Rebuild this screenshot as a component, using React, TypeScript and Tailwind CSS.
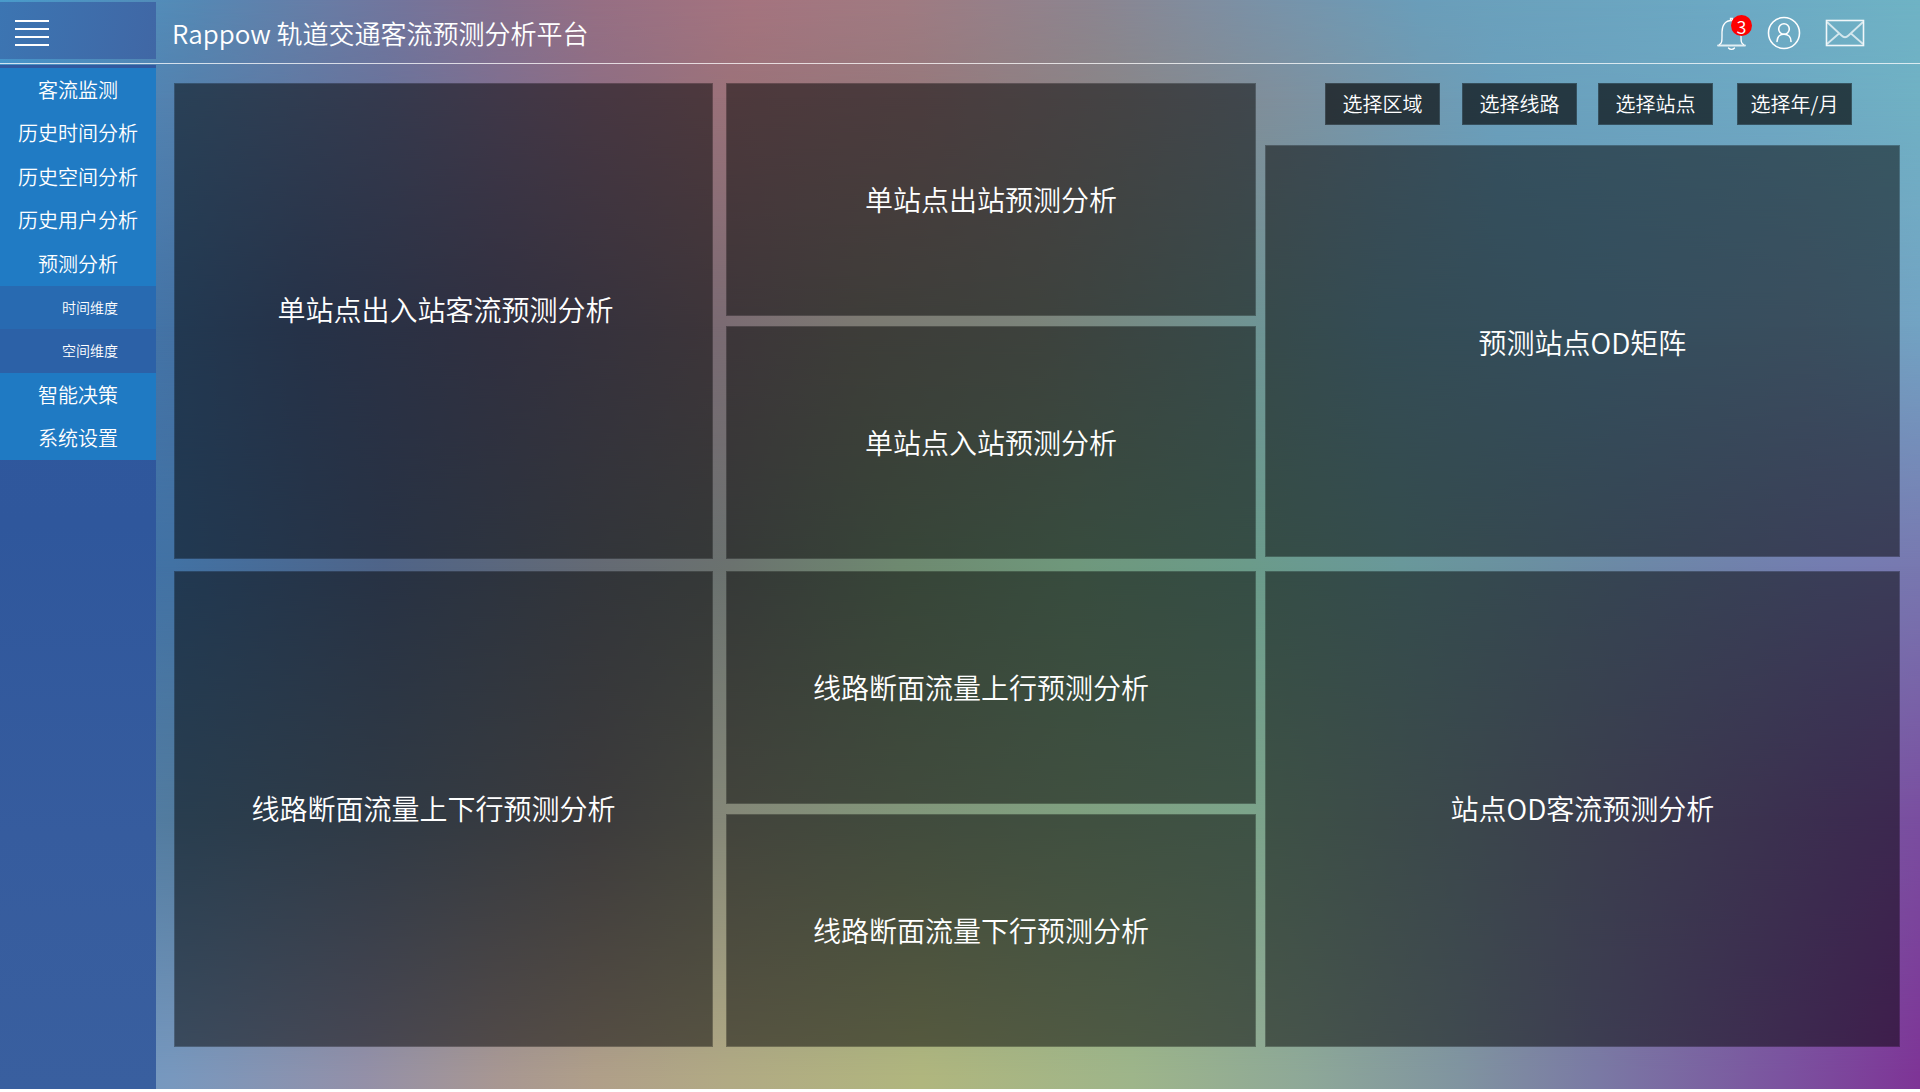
import React from "react";

const mainItemsTop = ["客流监测", "历史时间分析", "历史空间分析", "历史用户分析", "预测分析"];
const mainItemsBottom = ["智能决策", "系统设置"];
const filters = [
  { label: "选择区域", gap: "mr-[22px]" },
  { label: "选择线路", gap: "mr-[21px]" },
  { label: "选择站点", gap: "mr-[24px]" },
  { label: "选择年/月", gap: "" },
];

/* Colour mesh: each layer is one horizontal run of colours, faded in from the run above it. */
function Backdrop() {
  return (
    <div aria-hidden="true" className="absolute inset-x-0 top-0 bottom-[3px] -z-10 overflow-hidden">
      <div className="absolute inset-0 bg-[linear-gradient(to_right,#4a9bcb_0%,#5589b5_10%,#74759c_21%,#85708e_26%,#966f84_31%,#a5747f_39%,#a07b82_47%,#8c8590_57%,#7b91a6_65%,#6a9eba_74%,#6ca9c4_90%,#6fb3c5_100%)]" />
      <div className="absolute inset-0 bg-[linear-gradient(to_right,#4590c8_0%,#5580ac_10%,#6a739b_20%,#7f6f90_26%,#8e6e84_31%,#9b7279_38%,#96797c_48%,#898688_58%,#7e909e_67%,#6a9fbc_78%,#6da8c3_92%,#70b1c4_100%)] [mask-image:linear-gradient(to_bottom,transparent_0%,black_9%)]" />
      <div className="absolute inset-0 bg-[linear-gradient(to_right,#3f80bc_0%,#4472a4_9%,#4c6490_16%,#626080_26%,#7a6a73_37%,#7b7a72_45%,#7b847a_54%,#6f9493_65%,#6898aa_72%,#689cba_83%,#749cbc_94%,#72a3c3_100%)] [mask-image:linear-gradient(to_bottom,transparent_9%,black_30%)]" />
      <div className="absolute inset-0 bg-[linear-gradient(to_right,#3f74ae_0%,#4272a4_9%,#4f6488_20%,#646a74_31%,#6b726f_38%,#6e8a70_47%,#6f987c_56%,#6b9b8a_65%,#69989a_73%,#6c88a6_85%,#747cb0_95%,#7878b0_100%)] [mask-image:linear-gradient(to_bottom,transparent_30%,black_52%)]" />
      <div className="absolute inset-0 bg-[linear-gradient(to_right,#5082b2_0%,#527a9c_10%,#60748a_20%,#787678_31%,#858878_38%,#82967a_47%,#80a080_56%,#7ca48a_65%,#768f98_76%,#766f9e_88%,#7858a0_96%,#7a4ea0_100%)] [mask-image:linear-gradient(to_bottom,transparent_52%,black_75%)]" />
      <div className="absolute inset-0 bg-[linear-gradient(to_right,#6898c4_0%,#7898be_9%,#9490a8_19%,#a89792_26%,#b09f89_31%,#b1aa84_38%,#b0b67e_48%,#9eb58a_59%,#8ea898_68%,#8094a0_76%,#7a7aa4_83%,#7b529f_93%,#7e3496_100%)] [mask-image:linear-gradient(to_bottom,transparent_75%,black_99%)]" />
    </div>
  );
}

function Panel({ title, className = "pb-[2px]" }: { title: string; className?: string }) {
  return (
    <section className="flex min-h-0 flex-1 items-center justify-center border border-black/35 bg-black/50 bg-clip-padding text-[28px] leading-10">
      <h2 className={className}>{title}</h2>
    </section>
  );
}

function BellIcon() {
  return (
    <svg viewBox="0 0 30 34" className="h-[34px] w-[30px]" fill="none" stroke="currentColor" strokeWidth="1.3" strokeLinecap="round">
      <path d="M1 29.500h27" strokeWidth="1.8" opacity=".8" />
      <path d="M2.500 28.500C5 27 5 25 5 20v-4C5 9 8.500 4.500 14.500 4.500S24 9 24 16v4c0 5 0 7 2.500 8.500" />
      <path d="M13.500 4V2.500h2V4M11.500 32c1.500 1.800 4.500 1.800 6 0" />
    </svg>
  );
}

function UserIcon() {
  return (
    <svg viewBox="0 0 34 34" className="size-[34px]" fill="none" stroke="currentColor" strokeWidth="1.6" strokeLinecap="round">
      <circle cx="17" cy="17" r="15.500" />
      <circle cx="17" cy="13" r="5.300" />
      <path d="M10 25.500c0-4 2.500-7.200 7-7.200s7 3.200 7 7.200" />
    </svg>
  );
}

function MailIcon() {
  return (
    <svg viewBox="0 0 40 28" className="h-[28px] w-[40px]" fill="none" stroke="currentColor">
      <rect x="1.500" y="1.500" width="37" height="25" strokeWidth="1.600" opacity=".9" />
      <path d="M2 3l14.500 13.500q3.500 3.500 7 0L38 3M2 25l12-10.500M38 25L26 14.500" strokeWidth="1.800" opacity=".7" />
    </svg>
  );
}

function Sidebar() {
  return (
    <nav className="w-[156px] shrink-0 bg-[linear-gradient(to_bottom,#31599f_0%,#2f579c_45%,#365c9e_75%,#395f9f_100%)] pt-[3px]">
      <ul className="grid h-[392px] grid-rows-9 text-center text-xl">
        {mainItemsTop.map((t) => (
          <li key={t} className="flex">
            <a href="#" className="flex flex-1 items-center justify-center bg-[#207bc4]">{t}</a>
          </li>
        ))}
        <li className="flex text-sm">
          <a href="#" className="flex flex-1 items-center justify-end bg-[#286ab1] pr-[38px] pb-[2px]">时间维度</a>
        </li>
        <li className="flex text-sm">
          <a href="#" className="flex flex-1 items-center justify-end bg-[#2c61a7] pr-[38px] pb-[2px]">空间维度</a>
        </li>
        {mainItemsBottom.map((t) => (
          <li key={t} className="flex">
            <a href="#" className="flex flex-1 items-center justify-center bg-[#1f7ac3]">{t}</a>
          </li>
        ))}
      </ul>
    </nav>
  );
}

export default function App() {
  return (
    <div className="relative isolate flex min-h-screen flex-col bg-white pb-[3px] font-['Noto_Sans_CJK_SC',sans-serif] font-[350] text-white">
      <Backdrop />
      <header className="flex h-16 shrink-0 items-center border-b border-white/75">
        <div className="mt-[2px] mb-1 flex w-[156px] self-stretch bg-[linear-gradient(100deg,#3c75b2,#4067a5)]">
          <button aria-label="菜单" className="flex flex-col justify-center gap-[6px] pt-1 pl-[15px]">
            <span className="h-[2px] w-[34px] bg-white" />
            <span className="h-[2px] w-[34px] bg-white" />
            <span className="h-[2px] w-[34px] bg-white" />
            <span className="h-[2px] w-[34px] bg-white" />
          </button>
        </div>
        <h1 className="ml-4 flex-1 pt-[2px] text-[26px] leading-10">Rappow 轨道交通客流预测分析平台</h1>
        <div className="flex items-center pt-[3px] pr-[55px]">
          <button aria-label="通知" className="relative mr-5">
            <BellIcon />
            <span className="absolute -top-px left-[14px] flex size-[21px] items-center justify-center rounded-full bg-[#ff0000] text-lg leading-none">3</span>
          </button>
          <button aria-label="用户" className="mr-6">
            <UserIcon />
          </button>
          <button aria-label="邮件">
            <MailIcon />
          </button>
        </div>
      </header>

      <div className="flex flex-1 pt-px">
        <Sidebar />
        <main className="flex flex-1 pt-[18px] pr-5 pb-[42px] pl-[18px]">
          <div className="mr-[13px] flex flex-[539_1_0] flex-col gap-3">
            <Panel title="单站点出入站客流预测分析" className="pb-6 pl-1" />
            <Panel title="线路断面流量上下行预测分析" className="pr-5 pb-[2px]" />
          </div>
          <div className="mr-[9px] flex flex-[530_1_0] flex-col gap-3">
            <div className="flex flex-1 flex-col gap-[10px]">
              <Panel title="单站点出站预测分析" />
              <Panel title="单站点入站预测分析" />
            </div>
            <div className="flex flex-1 flex-col gap-[10px]">
              <Panel title="线路断面流量上行预测分析" className="pr-5 pb-[2px]" />
              <Panel title="线路断面流量下行预测分析" className="pr-5 pb-[2px]" />
            </div>
          </div>
          <div className="flex flex-[635_1_0] flex-col gap-3">
            <div className="flex flex-1 flex-col pb-[2px]">
              <div className="mb-5 flex justify-end pr-12">
                {filters.map((f) => (
                  <button key={f.label} className={"h-[42px] w-[115px] border border-black/50 bg-black/65 bg-clip-padding text-xl " + f.gap}>
                    {f.label}
                  </button>
                ))}
              </div>
              <Panel title="预测站点OD矩阵" className="pb-[18px]" />
            </div>
            <Panel title="站点OD客流预测分析" />
          </div>
        </main>
      </div>
    </div>
  );
}
